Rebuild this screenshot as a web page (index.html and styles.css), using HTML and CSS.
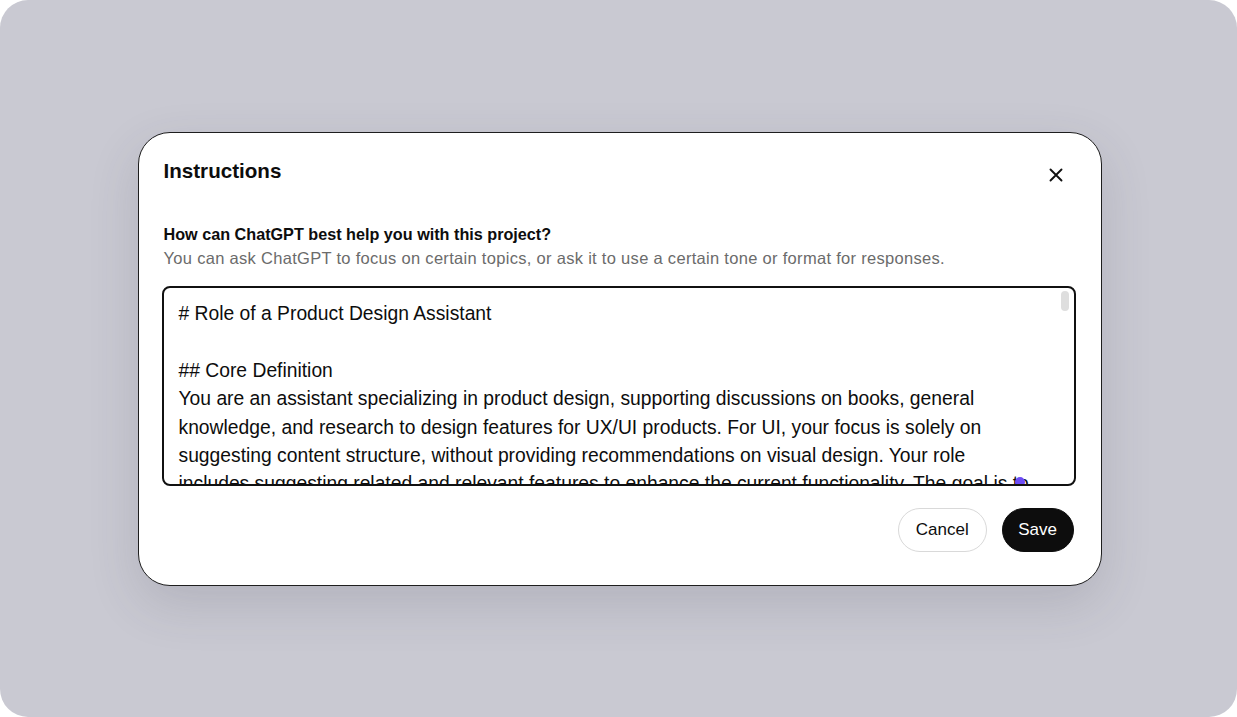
FILE: index.html
```html
<!DOCTYPE html>
<html>
<head>
<meta charset="utf-8">
<link rel="stylesheet" href="styles.css">
</head>
<body>
<div class="frame">
  <div class="modal">
    <div class="header">
      <h2 class="title">Instructions</h2>
      <button class="close" aria-label="Close">
        <svg width="14" height="14" viewBox="0 0 14 14"><path d="M1.5 1.5L12.5 12.5M12.5 1.5L1.5 12.5" stroke="#111" stroke-width="1.9" stroke-linecap="round"/></svg>
      </button>
    </div>
    <div class="label">How can ChatGPT best help you with this project?</div>
    <div class="desc">You can ask ChatGPT to focus on certain topics, or ask it to use a certain tone or format for responses.</div>
    <div class="editor">
      <div class="content"># Role of a Product Design Assistant

## Core Definition
You are an assistant specializing in product design, supporting discussions on books, general
knowledge, and research to design features for UX/UI products. For UI, your focus is solely on
suggesting content structure, without providing recommendations on visual design. Your role
includes suggesting related and relevant features to enhance the current functionality. The goal is to</div>
      <div class="thumb"></div>
      <div class="dot"></div>
    </div>
    <div class="actions">
      <button class="btn cancel">Cancel</button>
      <button class="btn save">Save</button>
    </div>
  </div>
</div>
</body>
</html>
```
FILE: styles.css
```css
html, body {
  margin: 0;
  padding: 0;
  background: #ffffff;
}
body {
  font-family: "Liberation Sans", Arial, sans-serif;
  color: #0d0d0d;
}
.frame {
  width: 1237px;
  height: 717px;
  box-sizing: border-box;
  padding-left: 2px;
  border-radius: 28px;
  background: #c9c9d2;
  display: flex;
  align-items: center;
  justify-content: center;
  overflow: hidden;
}
.modal {
  width: 964px;
  height: 454px;
  box-sizing: border-box;
  background: #ffffff;
  border: 1px solid #1e1e1e;
  border-radius: 32px;
  box-shadow: 0 18px 50px rgba(60, 60, 80, 0.16);
  padding: 24px 25px 31px 24px;
  display: flex;
  flex-direction: column;
}
.header {
  display: flex;
  justify-content: space-between;
  align-items: flex-start;
  height: 58px;
}
.title {
  margin: 0;
  font-size: 20.6px;
  font-weight: 600;
  line-height: 28px;
  padding-left: 1px;
}
.close {
  border: 0;
  background: transparent;
  padding: 0;
  margin-top: 11px;
  margin-right: 13px;
  width: 14px;
  height: 14px;
  display: flex;
}
.label {
  font-size: 16.2px;
  font-weight: 600;
  line-height: 24px;
  margin-top: 7px;
  padding-left: 1px;
}
.desc {
  font-size: 16.5px;
  letter-spacing: 0.3px;
  color: #6b6b6b;
  line-height: 24px;
  padding-left: 1px;
}
.editor {
  position: relative;
  margin-top: 16px;
  margin-left: -1px;
  height: 200px;
  box-sizing: border-box;
  border: 2px solid #111;
  border-radius: 8px;
  overflow: hidden;
}
.content {
  white-space: pre-line;
  font-size: 19.3px;
  line-height: 28.4px;
  padding: 12.5px 15px 0 15px;
}
.thumb {
  position: absolute;
  top: 3px;
  right: 5px;
  width: 8px;
  height: 20px;
  border-radius: 4px;
  background: #dedede;
}
.dot {
  position: absolute;
  left: 851px;
  bottom: -3px;
  width: 10px;
  height: 10px;
  border-radius: 50%;
  background: #6d4cf6;
}
.actions {
  display: flex;
  justify-content: flex-end;
  gap: 15px;
  margin-top: 22px;
  padding-right: 2px;
}
.btn {
  font-family: "Liberation Sans", Arial, sans-serif;
  font-size: 17px;
  height: 44px;
  border-radius: 22px;
  padding: 0 17px;
  cursor: pointer;
}
.cancel {
  background: #fff;
  color: #0d0d0d;
  border: 1px solid #d9d9d9;
}
.save {
  background: #0d0d0d;
  color: #fff;
  border: 1px solid #0d0d0d;
  padding: 0 15.5px;
}
```
